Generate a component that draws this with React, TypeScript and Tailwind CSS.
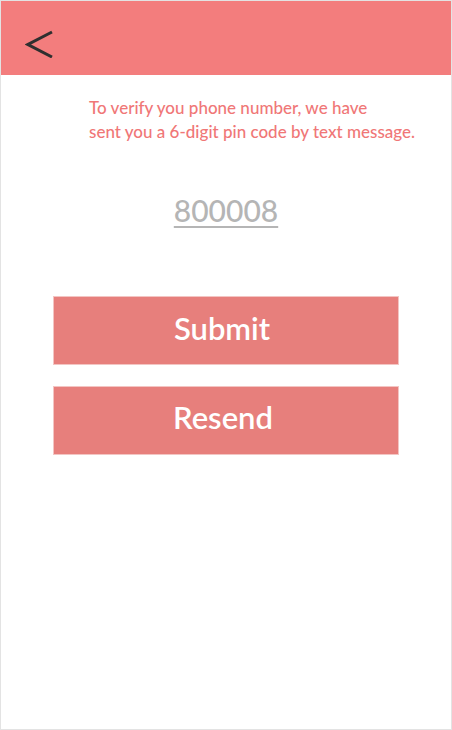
export default function App() {
  return (
    <div className="w-[452px] h-[730px] border border-[#e3e3e3] bg-white font-['Lato',sans-serif] flex flex-col">
      <header className="h-[74px] bg-[#f37d7d] flex items-start pl-[24px] pt-[29px]">
        <svg width="28" height="28" viewBox="0 0 28 28" fill="none">
          <polyline points="27,2 3,14.5 27,27" stroke="#2f2f2f" strokeWidth="3" strokeLinejoin="miter" />
        </svg>
      </header>
      <p className="pl-[88px] pt-[21px] text-[17px] leading-[24px] font-medium text-[#f07777]">
        To verify you phone number, we have
        <br />
        sent you a 6-digit pin code by text message.
      </p>
      <div className="mt-[51px] flex justify-center">
        <span className="text-[30px] leading-none font-medium text-[#b5b5b5] underline underline-offset-[4px] decoration-[2px]">800008</span>
      </div>
      <div className="mt-[71px] flex flex-col items-center gap-[21px]">
        <button className="w-[346px] h-[69px] bg-[#e77f7c] border border-[#f3c5c3] text-white text-[31px] font-semibold pb-[5px] pr-[8px]">
          Submit
        </button>
        <button className="w-[346px] h-[69px] bg-[#e77f7c] border border-[#f3c5c3] text-white text-[31px] font-semibold pb-[7px] pr-[6px]">
          Resend
        </button>
      </div>
    </div>
  );
}
